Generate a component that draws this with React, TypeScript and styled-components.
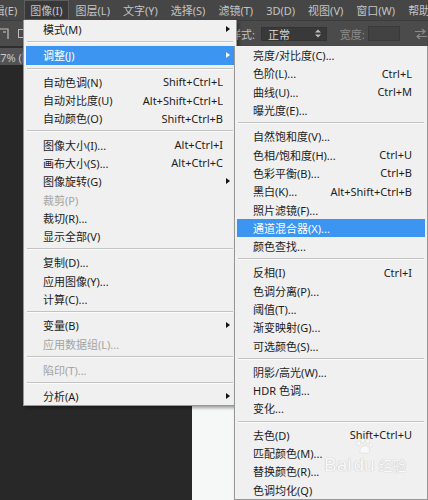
import styled, { createGlobalStyle } from 'styled-components';

const UI_FONT = `"Noto Sans", "Noto Sans CJK SC", sans-serif`;
const ROW_H = 18.3;

type Entry =
  | 'sep'
  | { label: string; keys?: string; sub?: boolean; active?: boolean; disabled?: boolean };

const topMenus = ['编辑(E)', '图像(I)', '图层(L)', '文字(Y)', '选择(S)', '滤镜(T)', '3D(D)', '视图(V)', '窗口(W)', '帮助(H)'];

const imageMenu: Entry[] = [
  { label: '模式(M)', sub: true },
  'sep',
  { label: '调整(J)', sub: true, active: true },
  'sep',
  { label: '自动色调(N)', keys: 'Shift+Ctrl+L' },
  { label: '自动对比度(U)', keys: 'Alt+Shift+Ctrl+L' },
  { label: '自动颜色(O)', keys: 'Shift+Ctrl+B' },
  'sep',
  { label: '图像大小(I)...', keys: 'Alt+Ctrl+I' },
  { label: '画布大小(S)...', keys: 'Alt+Ctrl+C' },
  { label: '图像旋转(G)', sub: true },
  { label: '裁剪(P)', disabled: true },
  { label: '裁切(R)...' },
  { label: '显示全部(V)' },
  'sep',
  { label: '复制(D)...' },
  { label: '应用图像(Y)...' },
  { label: '计算(C)...' },
  'sep',
  { label: '变量(B)', sub: true },
  { label: '应用数据组(L)...', disabled: true },
  'sep',
  { label: '陷印(T)...', disabled: true },
  'sep',
  { label: '分析(A)', sub: true },
];

const adjustMenu: Entry[] = [
  { label: '亮度/对比度(C)...' },
  { label: '色阶(L)...', keys: 'Ctrl+L' },
  { label: '曲线(U)...', keys: 'Ctrl+M' },
  { label: '曝光度(E)...' },
  'sep',
  { label: '自然饱和度(V)...' },
  { label: '色相/饱和度(H)...', keys: 'Ctrl+U' },
  { label: '色彩平衡(B)...', keys: 'Ctrl+B' },
  { label: '黑白(K)...', keys: 'Alt+Shift+Ctrl+B' },
  { label: '照片滤镜(F)...' },
  { label: '通道混合器(X)...', active: true },
  { label: '颜色查找...' },
  'sep',
  { label: '反相(I)', keys: 'Ctrl+I' },
  { label: '色调分离(P)...' },
  { label: '阈值(T)...' },
  { label: '渐变映射(G)...' },
  { label: '可选颜色(S)...' },
  'sep',
  { label: '阴影/高光(W)...' },
  { label: 'HDR 色调...' },
  { label: '变化...' },
  'sep',
  { label: '去色(D)', keys: 'Shift+Ctrl+U' },
  { label: '匹配颜色(M)...' },
  { label: '替换颜色(R)...' },
  { label: '色调均化(Q)' },
];

function MenuList({ entries, indent, keysRight }: { entries: Entry[]; indent: number; keysRight: number }) {
  return (
    <>
      {entries.map((e, i) =>
        e === 'sep' ? (
          <Separator key={i} />
        ) : (
          <Item key={i} active={!!e.active} disabled={!!e.disabled} indent={indent} keysRight={keysRight}>
            <ItemLabel>{e.label}</ItemLabel>
            {e.keys && <Shortcut>{e.keys}</Shortcut>}
            {e.sub && <Arrow active={!!e.active} />}
          </Item>
        )
      )}
    </>
  );
}

function App() {
  return (
    <>
      <GlobalStyle />
      <Screen>
        <MenuBar>
          {topMenus.map((m) => (
            <TopItem key={m} open={m === '图像(I)'}>
              {m}
            </TopItem>
          ))}
        </MenuBar>

        <OptionsBar>
          <ToolIcon width="10" height="14" viewBox="0 0 10 14">
            <path d="M0 2h8v10" fill="none" stroke="#bdbdbd" strokeWidth="1.2" />
            <path d="M3 5h3" stroke="#bdbdbd" strokeWidth="1.2" />
          </ToolIcon>
          <ToolIcon width="10" height="14" viewBox="0 0 10 14" style={{ marginLeft: 8 }}>
            <rect x="0.5" y="2.5" width="8" height="8" fill="none" stroke="#bdbdbd" />
          </ToolIcon>
          <OptLabel gap={6} style={{ marginLeft: 202 }}>样式:</OptLabel>
          <SelectBox>
            <span>正常</span>
            <SpinArrows>
              <svg width="6" height="9" viewBox="0 0 6 9">
                <path d="M0 3.5L3 0.5 6 3.5z M0 5.5L3 8.5 6 5.5z" fill="#bdbdbd" />
              </svg>
            </SpinArrows>
          </SelectBox>
          <OptLabel dim gap={3}>宽度:</OptLabel>
          <InputBox />
          <SwapIcon width="14" height="12" viewBox="0 0 14 12">
            <path d="M1 3.5h10M8 1l3 2.5L8 6M13 8.5H3M6 6l-3 2.5L6 11" fill="none" stroke="#8a8a8a" strokeWidth="1.2" />
          </SwapIcon>
        </OptionsBar>

        <TabRow>
          <DocTab>27% (图层 1, RGB/8)</DocTab>
        </TabRow>

        <Workspace>
          <Canvas />
        </Workspace>

        <MainMenu>
          <MenuList entries={imageMenu} indent={17} keysRight={11} />
        </MainMenu>

        <SubMenu>
          <MenuList entries={adjustMenu} indent={16} keysRight={13} />
        </SubMenu>

        <Watermark>
          <WmBig>Bai</WmBig>
          <PawWrap>
            <svg width="20" height="17" viewBox="0 0 18 16">
              <ellipse cx="4" cy="5" rx="1.8" ry="2.3" fill="#fff" stroke="#cfcfcf" strokeWidth="0.6" />
              <ellipse cx="8" cy="2.6" rx="1.8" ry="2.2" fill="#fff" stroke="#cfcfcf" strokeWidth="0.6" />
              <ellipse cx="12.5" cy="3" rx="1.8" ry="2.2" fill="#fff" stroke="#cfcfcf" strokeWidth="0.6" />
              <ellipse cx="15.5" cy="6.5" rx="1.6" ry="2" fill="#fff" stroke="#cfcfcf" strokeWidth="0.6" />
              <path d="M5 13c0-3 3-6 5-6s5 3 4 6c-1 2-8 2-9 0z" fill="#fff" stroke="#cfcfcf" strokeWidth="0.6" />
            </svg>
            <WmBig>du</WmBig>
          </PawWrap>
          <WmSmall>经验</WmSmall>
        </Watermark>
      </Screen>
    </>
  );
}

export default App;

const GlobalStyle = createGlobalStyle`
  html, body {
    margin: 0;
    padding: 0;
    background: #282828;
  }
  body {
    font-family: ${UI_FONT};
    overflow: hidden;
  }
`;

const Screen = styled.div`
  position: relative;
  width: 428px;
  height: 500px;
  overflow: hidden;
  background: #282828;
  display: flex;
  flex-direction: column;
`;

const MenuBar = styled.div`
  height: 20px;
  flex-shrink: 0;
  display: flex;
  align-items: stretch;
  background: #464646;
  margin-left: -24px;
  white-space: nowrap;
`;

const TopItem = styled.div<{ open: boolean }>`
  display: flex;
  align-items: center;
  padding: 0 6.5px;
  font-size: 11px;
  color: #c4c4c4;
  background: ${({ open }) => (open ? '#383838' : 'transparent')};
  box-shadow: ${({ open }) => (open ? 'inset 0 0 0 1px #5c5c5c' : 'none')};
`;

const OptionsBar = styled.div`
  height: 26px;
  flex-shrink: 0;
  display: flex;
  align-items: center;
  background: #4b4b4b;
  border-top: 1px solid #3c3c3c;
  box-sizing: border-box;
  white-space: nowrap;
`;

const ToolIcon = styled.svg`
  flex-shrink: 0;
`;

const OptLabel = styled.span<{ dim?: boolean; gap: number }>`
  font-size: 11px;
  color: ${({ dim }) => (dim ? '#8c8c8c' : '#c4c4c4')};
  margin-right: ${({ gap }) => gap}px;
`;

const SelectBox = styled.div`
  width: 67px;
  height: 14px;
  box-sizing: border-box;
  display: flex;
  align-items: center;
  justify-content: space-between;
  padding: 0 5px 0 6px;
  background: #393939;
  border: 1px solid #333;
  font-size: 11px;
  color: #d8d8d8;
  margin-right: 13px;
`;

const SpinArrows = styled.span`
  display: flex;
  align-items: center;
`;

const InputBox = styled.div`
  width: 33px;
  height: 15px;
  background: #424242;
  border: 1px solid #3a3a3a;
  box-sizing: border-box;
`;

const SwapIcon = styled.svg`
  margin-left: 14px;
  flex-shrink: 0;
`;

const TabRow = styled.div`
  height: 17px;
  flex-shrink: 0;
  display: flex;
  background: #3a3a3a;
  border-top: 2px solid #2e2e2e;
`;

const DocTab = styled.div`
  display: flex;
  align-items: center;
  padding: 0 10px 0 0;
  margin-left: -6px;
  background: #535353;
  font-size: 11px;
  color: #c8c8c8;
  white-space: nowrap;
`;

const Workspace = styled.div`
  flex: 1;
  display: flex;
  padding: 20px 0 0 192px;
`;

const Canvas = styled.div`
  flex: 1;
  background: #f6f7f7;
`;

const MenuPanel = styled.div`
  position: absolute;
  box-sizing: border-box;
  background: #f0f0f0;
  border: 1px solid #979797;
  box-shadow: 2px 2px 3px rgba(0, 0, 0, 0.35);
  font-size: 11px;
  color: #1c1c1c;
  white-space: nowrap;
`;

const MainMenu = styled(MenuPanel)`
  left: 23px;
  top: 20px;
  width: 214px;
  border-top: none;
`;

const SubMenu = styled(MenuPanel)`
  left: 234px;
  top: 46px;
  width: 194px;
  border-top: none;
`;

const Item = styled.div<{ active: boolean; disabled: boolean; indent: number; keysRight: number }>`
  height: ${ROW_H}px;
  margin: 0 2px;
  display: flex;
  align-items: center;
  padding: 0 ${({ keysRight }) => keysRight}px 0 ${({ indent }) => indent}px;
  background: ${({ active }) => (active ? '#3d95f2' : 'transparent')};
  color: ${({ active, disabled }) => (active ? '#ffffff' : disabled ? '#a3a3a3' : '#1c1c1c')};
`;

const ItemLabel = styled.span`
  flex: 1;
`;

const Shortcut = styled.span`
  text-align: right;
`;

const Arrow = styled.span<{ active: boolean }>`
  width: 0;
  height: 0;
  margin-right: -7px;
  border-left: 4px solid ${({ active }) => (active ? '#ffffff' : '#111')};
  border-top: 3.5px solid transparent;
  border-bottom: 3.5px solid transparent;
`;

const Separator = styled.div`
  height: 8px;
  display: flex;
  align-items: center;
  margin: 0 3px;

  &::after {
    content: '';
    flex: 1;
    height: 0;
    border-top: 1px solid #c3c3c3;
    border-bottom: 1px solid #fbfbfb;
  }
`;

const Watermark = styled.div`
  position: absolute;
  left: 324px;
  top: 448px;
  display: flex;
  align-items: flex-end;
  gap: 2px;
  opacity: 0.6;
  pointer-events: none;
`;

const WmBig = styled.span`
  font-family: "Liberation Sans", Arial, sans-serif;
  font-size: 19px;
  color: #ffffff;
  text-shadow: 0 0 1px #a8a8a8, 0 0 1px #a8a8a8;
  line-height: 20px;
`;

const PawWrap = styled.span`
  display: flex;
  flex-direction: column;
  align-items: center;
  margin-top: -10px;
`;

const WmSmall = styled.span`
  font-family: "Noto Sans CJK SC", sans-serif;
  font-size: 14px;
  color: #ffffff;
  text-shadow: 0 0 1px #a8a8a8, 0 0 1px #a8a8a8;
  line-height: 20px;
  margin-left: 2px;
`;
